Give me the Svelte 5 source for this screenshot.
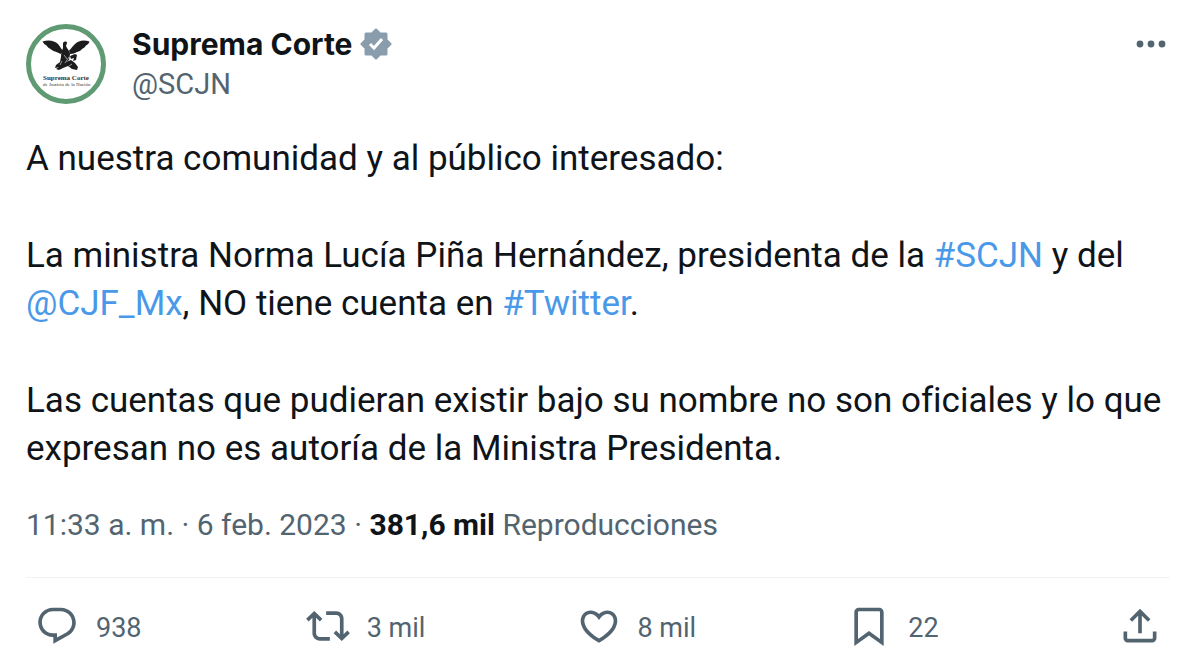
<script lang="ts">
const actions = [
  {
    name: "Responder",
    count: "938",
    path: "M1.751 10c0-4.42 3.584-8 8.005-8h4.366c4.49 0 8.129 3.64 8.129 8.13 0 2.96-1.607 5.68-4.196 7.11l-8.054 4.46v-3.69h-.067c-4.49.1-8.183-3.51-8.183-8.01zm8.005-6c-3.317 0-6.005 2.69-6.005 6 0 3.37 2.77 6.08 6.138 6.01l.351-.01h1.761v2.3l5.087-2.81c1.951-1.08 3.163-3.13 3.163-5.36 0-3.39-2.744-6.13-6.129-6.13H9.756z"
  },
  {
    name: "Retwittear",
    count: "3 mil",
    path: "M4.5 3.88l4.432 4.14-1.364 1.46L5.5 7.55V16c0 1.1.896 2 2 2H13v2H7.5c-2.209 0-4-1.79-4-4V7.55L1.432 9.48.068 8.02 4.5 3.88zM16.5 6H11V4h5.5c2.209 0 4 1.79 4 4v8.45l2.068-1.93 1.364 1.46-4.432 4.14-4.432-4.14 1.364-1.46 2.068 1.93V8c0-1.1-.896-2-2-2z"
  },
  {
    name: "Me gusta",
    count: "8 mil",
    path: "M16.697 5.5c-1.222-.06-2.679.51-3.89 2.16l-.805 1.09-.806-1.09C9.984 6.01 8.526 5.44 7.304 5.5c-1.243.07-2.349.78-2.91 1.91-.552 1.12-.633 2.78.479 4.82 1.074 1.97 3.257 4.27 7.129 6.61 3.87-2.34 6.052-4.64 7.126-6.61 1.111-2.04 1.03-3.7.477-4.82-.561-1.13-1.666-1.84-2.908-1.91zm4.187 7.69c-1.351 2.48-4.001 5.12-8.379 7.67l-.503.3-.504-.3c-4.379-2.55-7.029-5.19-8.382-7.67-1.36-2.5-1.41-4.86-.514-6.67.887-1.79 2.647-2.91 4.601-3.01 1.651-.09 3.368.56 4.798 2.01 1.429-1.45 3.146-2.1 4.796-2.01 1.954.1 3.714 1.22 4.601 3.01.896 1.81.846 4.17-.514 6.67z"
  },
  {
    name: "Guardar",
    count: "22",
    path: "M4 4.5C4 3.12 5.119 2 6.5 2h11C18.881 2 20 3.12 20 4.5v18.44l-8-5.71-8 5.71V4.5zM6.5 4c-.276 0-.5.22-.5.5v14.56l6-4.29 6 4.29V4.5c0-.28-.224-.5-.5-.5h-11z"
  },
  {
    name: "Compartir",
    count: "",
    path: "M12 2.59l5.7 5.7-1.41 1.42L13 6.41V16h-2V6.41l-3.3 3.3-1.41-1.42L12 2.59zM21 15l-.02 3.51c0 1.38-1.12 2.49-2.5 2.49H5.5C4.11 21 3 19.88 3 18.5V15h2v3.5c0 .28.22.5.5.5h12.98c.28 0 .5-.22.5-.5L19 15h2z"
  }
];
</script>

<article class="tweet">
  <header>
    <svg class="avatar" viewBox="0 0 80 80" aria-hidden="true">
      <circle cx="40" cy="40" r="37.5" fill="#fff" stroke="#5f9a72" stroke-width="5" />
      <!-- wings, body, snake and cactus -->
      <g fill="#1c1c1e">
        <path d="M16.500 17.500c6-2 12-1 15.500 2.500 2 2 3 5 5 6.500l-2 3.500c-3-1-4-2-6-2.500-2-.5-3-1.500-4.500-2.500-2-1-3-2-4-3.500-1.500-1-3-2-4-4z" />
        <path d="M63.500 17.500c-6-2-11-1-14.500 2.500-2.500 2-4 5-6 6.500l1 3.500c3 0 5-1 7-2 2-.5 4-1.500 5-3 2-1 3-2 4-3.500 1.500-1 3-2 3.500-4z" />
        <path d="M37 19c1-2 4-2 4 0l-1 3c1 3 4 5 4 8l-1 6-4 3-5 4-5 1 1-3 4-3 1-5c0-4 1-6 2-9z" />
        <path d="M44 32l5-2 2 1-1 5-3 1 1-3-3 1zM40 38l5-2 4 3 3 4-1 3-5-1-4-3-5 2-4 2-3-1z" />
      </g>
      <path d="M38 31l3 4M43 33l-4 6M46 40l-3 2M36 37l-2 4" stroke="#999" stroke-width="1" />
      <text class="crest" x="17" y="56" font-size="7" font-weight="700">Suprema Corte</text>
      <text class="crest" x="17" y="62" font-size="5">de Justicia de la Nación</text>
    </svg>
    <div class="author">
      <a class="name" href="#perfil">
        Suprema Corte
        <svg class="badge" viewBox="0 0 32 32" role="img" aria-label="Cuenta verificada">
          <path d="M16 2l4 4h6v6l4 4-4 4v6h-6l-4 4-4-4H6v-6l-4-4 4-4V6h6z" fill="#899dad" stroke="#899dad" stroke-width="3" stroke-linejoin="round" />
          <path d="M10 16l4 4 8-9" fill="none" stroke="#fff" stroke-width="3" />
        </svg>
      </a>
      <a class="handle" href="#perfil">@SCJN</a>
    </div>
    <button class="more" aria-label="Más opciones">
      <svg viewBox="0 0 38 44" aria-hidden="true">
        <circle cx="8" cy="22" r="3.4" />
        <circle cx="19" cy="22" r="3.4" />
        <circle cx="30" cy="22" r="3.4" />
      </svg>
    </button>
  </header>

  <div class="text">
    <p>A nuestra comunidad y al público interesado:</p>
    <p>
      La ministra Norma Lucía Piña Hernández, presidenta de la <a href="#scjn">#SCJN</a> y del
      <a href="#cjf">@CJF_Mx</a>, NO tiene cuenta en <a href="#twitter">#Twitter</a>.
    </p>
    <p>Las cuentas que pudieran existir bajo su nombre no son oficiales y lo que expresan no es autoría de la Ministra Presidenta.</p>
  </div>

  <div class="meta">
    <time datetime="2023-02-06T11:33">11:33 a. m. · 6 feb. 2023</time> · <strong>381,6 mil</strong> Reproducciones
  </div>

  <footer>
    {#each actions as action}
      <button aria-label={`${action.name} ${action.count}`}>
        <svg viewBox="0 0 24 24" aria-hidden="true"><path d={action.path} /></svg>
        {#if action.count}<span>{action.count}</span>{/if}
      </button>
    {/each}
  </footer>
</article>

<style>
:global(body) {
  margin: 0;
  background: #fff;
}
.tweet {
  padding: 24px 30px 16px 26px;
  font-family: Roboto, "Liberation Sans", sans-serif;
  font-size: 29px;
  font-variant-ligatures: none;
  color: #0f1419;
}
header {
  display: flex;
  align-items: flex-start;
}
.avatar {
  width: 80px;
  height: 80px;
  margin-right: 26px;
}
.crest {
  font-family: "Liberation Serif", serif;
  fill: #333;
}
.author {
  display: flex;
  flex-direction: column;
  flex: 1;
  line-height: 40px;
}
a {
  text-decoration: none;
}
.name {
  display: flex;
  align-items: center;
  gap: 8px;
  font-family: Inter, Roboto, sans-serif;
  font-size: 30px;
  font-weight: 700;
  color: #0f1419;
}
.badge {
  width: 32px;
  height: 32px;
}
.handle, .meta {
  color: #536471;
}
button {
  display: flex;
  align-items: center;
  padding: 0;
  border: none;
  background: none;
  font: inherit;
  color: #536471;
  cursor: pointer;
}
button svg {
  width: 44px;
  height: 44px;
  fill: #536471;
}
.more {
  height: 40px;
}
.more svg {
  width: 38px;
}
.text {
  padding-top: 31px;
  font-size: 35px;
  line-height: 48px;
}
.text p {
  margin: 0 0 49px;
}
.text p:last-child {
  margin: 0;
}
.text a {
  color: #4a99e9;
}
.meta {
  padding: 32px 0;
  font-size: 30px;
  line-height: 40px;
  border-bottom: 1px solid #eff3f4;
}
.meta strong {
  color: #0f1419;
}
footer {
  display: grid;
  grid-template-columns: repeat(4, 1fr) 44px;
  padding: 26px 8px 0 9px;
}
footer button {
  gap: 17px;
  font-size: 27px;
}
footer span {
  padding-top: 4px;
}
</style>
